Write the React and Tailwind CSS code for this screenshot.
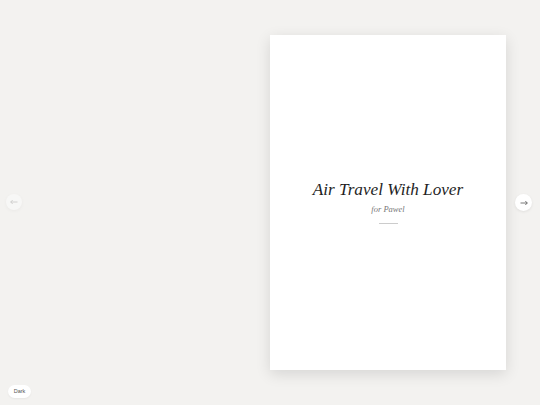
export default function App() {
  return (
    <div className="w-[540px] h-[405px] bg-[#f3f2f0] relative overflow-hidden" style={{ fontFamily: '"Liberation Serif", serif' }}>
      <div className="absolute left-[270px] top-[35px] w-[236px] h-[335px] bg-white shadow-[0_4px_14px_rgba(0,0,0,0.12)] flex flex-col items-center justify-center">
        <div className="italic text-[17.2px] leading-none text-[#1f1f1f]">Air Travel With Lover</div>
        <div className="italic text-[8.5px] leading-none text-[#777] mt-[7px]">for Pawel</div>
        <div className="w-[19px] h-px bg-[#ccc] mt-[10px]"></div>
      </div>
      <div className="absolute left-[6px] top-[194px] w-[16px] h-[16px] rounded-full bg-white opacity-40 flex items-center justify-center shadow-[0_1px_3px_rgba(0,0,0,0.08)]">
        <svg width="8" height="6" viewBox="0 0 8 6" fill="none" stroke="#888" strokeWidth="0.8"><path d="M7.5 3H0.7M2.7 1L0.7 3L2.7 5" /></svg>
      </div>
      <div className="absolute left-[515px] top-[194px] w-[17px] h-[17px] rounded-full bg-white flex items-center justify-center shadow-[0_1px_3px_rgba(0,0,0,0.08)]">
        <svg width="8" height="6" viewBox="0 0 8 6" fill="none" stroke="#555" strokeWidth="0.8"><path d="M0.5 3H7.3M5.3 1L7.3 3L5.3 5" /></svg>
      </div>
      <div className="absolute left-[8px] top-[385px] w-[23px] h-[13px] rounded-full bg-white flex items-center justify-center text-[5.5px] text-[#555] shadow-[0_1px_2px_rgba(0,0,0,0.05)]" style={{ fontFamily: '"Liberation Sans", sans-serif' }}>Dark</div>
    </div>
  );
}
